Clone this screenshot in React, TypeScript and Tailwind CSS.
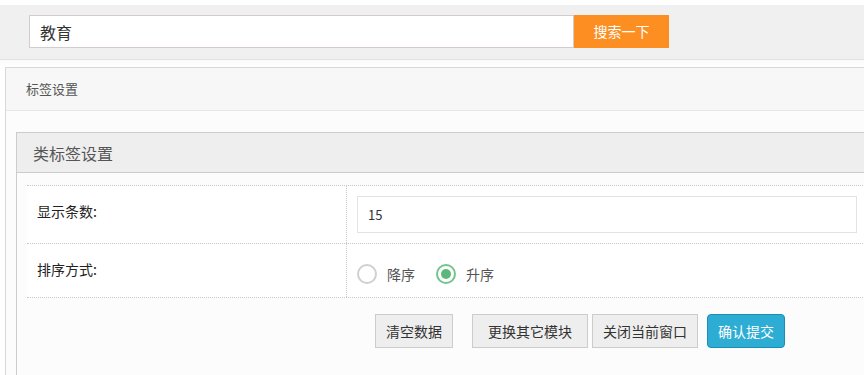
import { useState } from 'react';

export default function App() {
  const [order, setOrder] = useState<'desc' | 'asc'>('asc');
  const [count, setCount] = useState('15');

  return (
    <div className="w-[864px] h-[375px] overflow-hidden bg-white font-['Noto_Sans_CJK_SC','Noto_Sans',sans-serif] text-[#333]">
      {/* search bar */}
      <div className="mt-[5px] h-[54px] bg-[#f0f0f0] pt-[10px] pl-[29px] flex items-start">
        <div className="w-[545px] h-[33px] bg-white border border-[#d3cbcd] flex items-center pl-[10px] text-[16px] text-[#333]">
          教育
        </div>
        <button className="w-[95px] h-[33px] bg-[#fd8e22] text-white text-[14px] flex items-center justify-center">
          搜索一下
        </button>
      </div>
      <div className="h-[8px] border-t border-[#e2e2e2] bg-gradient-to-b from-[#fafafa] to-white" />

      {/* outer panel */}
      <div className="ml-[5px] w-[900px] border border-[#d8d8d8] bg-[#fcfcfc] h-[320px]">
        <div className="h-[43px] bg-[#f7f7f7] border-b border-[#e6e6e6] flex items-center pl-[20px] text-[13px] text-[#555]">
          标签设置
        </div>
        <div className="pt-[21px] pl-[10px]">
          {/* inner panel */}
          <div className="w-[900px] border border-[#cccccc] bg-[#fcfcfc] h-[260px]">
            <div className="h-[40px] bg-[#eeeeee] border-b border-[#cccccc] flex items-center pl-[16px] text-[16px] text-[#555]">
              类标签设置
            </div>
            <div className="pt-[12px] pl-[10px]">
              <div className="border-t border-dotted border-[#c8c8c8]">
                <div className="flex border-b border-dotted border-[#c8c8c8] bg-white">
                  <div className="w-[320px] shrink-0 border-r border-dotted border-[#c8c8c8] pl-[10px] pt-[15px] text-[14px] leading-[20px] text-[#222]">
                    显示条数:
                  </div>
                  <div className="py-[10px] pl-[10px]">
                    <input
                      value={count}
                      onChange={(e) => setCount(e.target.value)}
                      className="w-[500px] h-[37px] border border-[#e3e3e3] bg-white pl-[10px] text-[13px] text-[#333] outline-none"
                    />
                  </div>
                </div>
                <div className="flex h-[54px] border-b border-dotted border-[#c8c8c8] bg-white">
                  <div className="w-[320px] shrink-0 border-r border-dotted border-[#c8c8c8] pl-[10px] pt-[15px] text-[14px] leading-[20px] text-[#222]">
                    排序方式:
                  </div>
                  <div className="flex items-center pl-[10px] pt-[7px] text-[14px] text-[#555]">
                    <label className="flex items-center gap-[10px] cursor-pointer" onClick={() => setOrder('desc')}>
                      <span
                        className={`w-[20px] h-[20px] rounded-full border-2 flex items-center justify-center ${
                          order === 'desc' ? 'border-[#72c58b]' : 'border-[#d0d0d0]'
                        }`}
                      >
                        {order === 'desc' && <span className="w-[10px] h-[10px] rounded-full bg-[#5cb87a]" />}
                      </span>
                      降序
                    </label>
                    <label className="flex items-center gap-[10px] ml-[21px] cursor-pointer" onClick={() => setOrder('asc')}>
                      <span
                        className={`w-[20px] h-[20px] rounded-full border-2 flex items-center justify-center ${
                          order === 'asc' ? 'border-[#72c58b]' : 'border-[#d0d0d0]'
                        }`}
                      >
                        {order === 'asc' && <span className="w-[10px] h-[10px] rounded-full bg-[#5cb87a]" />}
                      </span>
                      升序
                    </label>
                  </div>
                </div>
              </div>

              {/* actions */}
              <div className="flex items-center mt-[16px] pl-[348px] text-[14px]">
                <button className="w-[78px] h-[34px] bg-[#eeeeee] border border-[#cccccc] text-[#333]">清空数据</button>
                <button className="ml-[19px] w-[116px] h-[34px] bg-[#eeeeee] border border-[#cccccc] text-[#333]">更换其它模块</button>
                <button className="ml-[4px] w-[106px] h-[34px] bg-[#eeeeee] border border-[#cccccc] text-[#333]">关闭当前窗口</button>
                <button className="ml-[9px] w-[78px] h-[34px] bg-[#2dadd4] border border-[#1b8db5] rounded-[4px] text-white">确认提交</button>
              </div>
            </div>
          </div>
        </div>
      </div>
    </div>
  );
}
